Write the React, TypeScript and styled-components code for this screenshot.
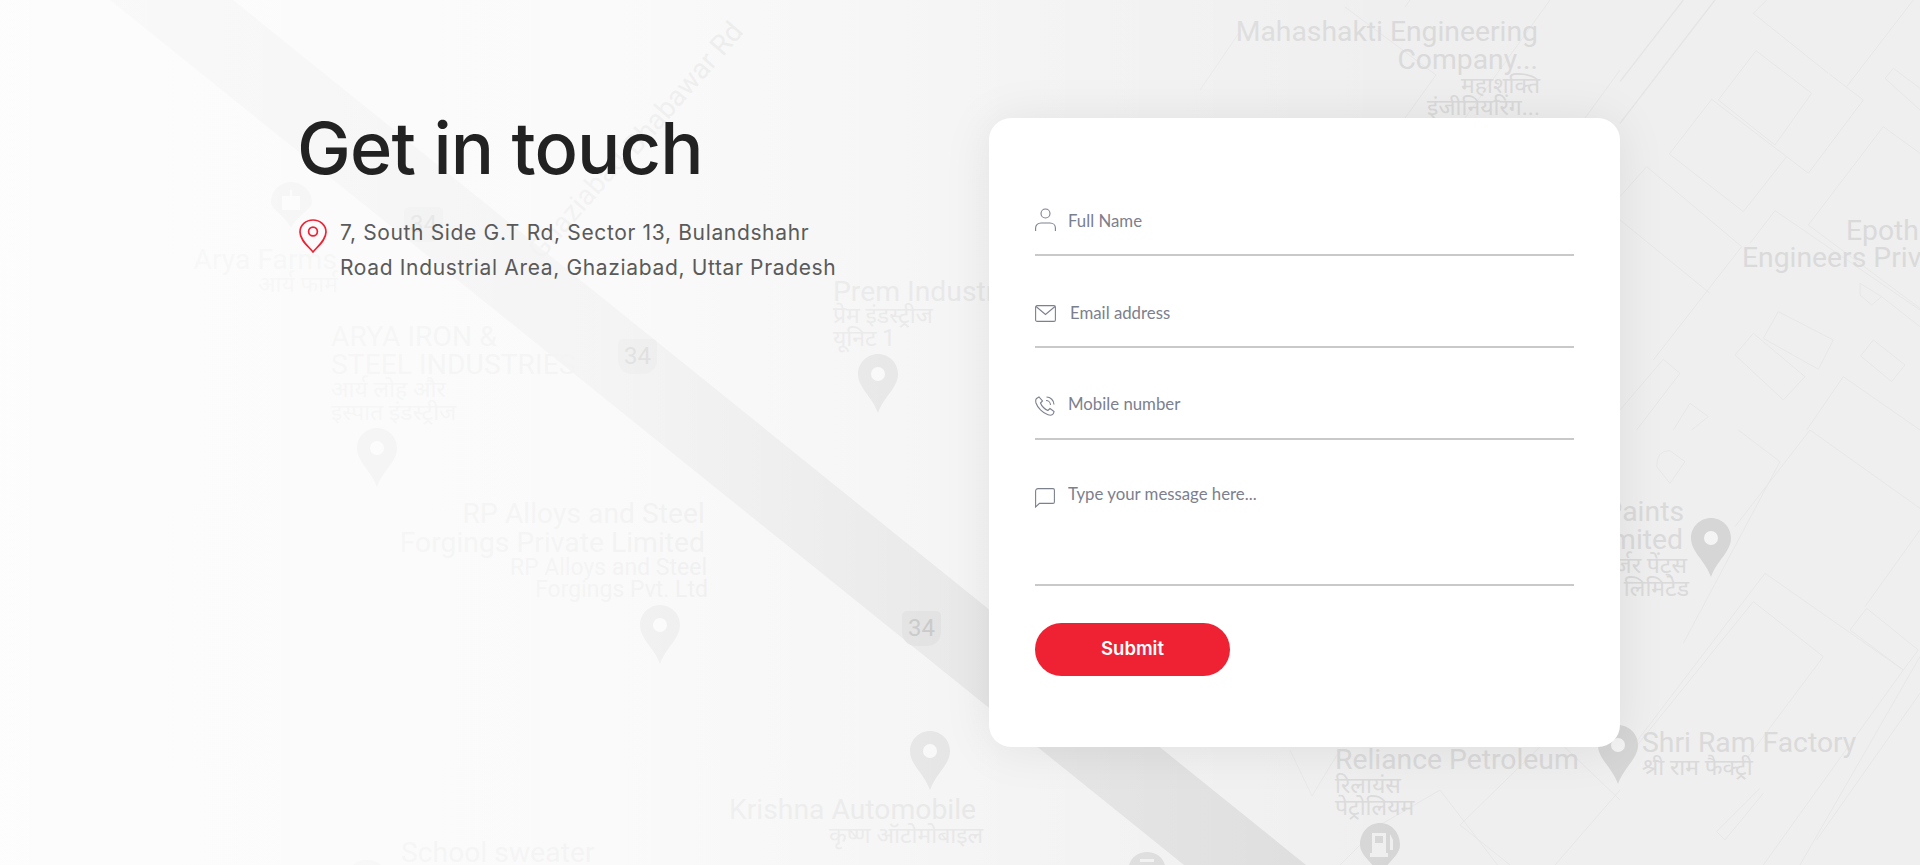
import React from 'react';
import styled, { createGlobalStyle } from 'styled-components';

const GlobalStyle = createGlobalStyle`
  html, body {
    margin: 0;
    padding: 0;
    background: #fff;
  }
  * {
    box-sizing: border-box;
  }
`;

const headingFont = `Inter, "Liberation Sans", sans-serif`;
const formFont = `Lato, "Open Sans", sans-serif`;
const mapFont = `Roboto, "Noto Sans", sans-serif`;

type Label = { text: string; x: number; y: number; end?: boolean; small?: boolean };

const labels: Label[] = [
  { text: 'Arya Farms', x: 337, y: 270, end: true },
  { text: 'आर्य फार्म', x: 338, y: 292, end: true, small: true },
  { text: 'ARYA IRON &', x: 331, y: 347 },
  { text: 'STEEL INDUSTRIES', x: 331, y: 375 },
  { text: 'आर्य लोह और', x: 331, y: 397, small: true },
  { text: 'इस्पात इंडस्ट्रीज', x: 331, y: 420, small: true },
  { text: 'Prem Industries', x: 833, y: 302 },
  { text: 'प्रेम इंडस्ट्रीज', x: 833, y: 323, small: true },
  { text: 'यूनिट 1', x: 833, y: 346, small: true },
  { text: 'RP Alloys and Steel', x: 705, y: 524, end: true },
  { text: 'Forgings Private Limited', x: 705, y: 553, end: true },
  { text: 'RP Alloys and Steel', x: 707, y: 575, end: true, small: true },
  { text: 'Forgings Pvt. Ltd', x: 708, y: 597, end: true, small: true },
  { text: 'Krishna Automobile', x: 729, y: 820 },
  { text: 'कृष्ण ऑटोमोबाइल', x: 829, y: 843, small: true },
  { text: 'School sweater', x: 401, y: 863 },
  { text: 'Mahashakti Engineering', x: 1538, y: 42, end: true },
  { text: 'Company...', x: 1538, y: 70, end: true },
  { text: 'महाशक्ति', x: 1540, y: 93, end: true, small: true },
  { text: 'इंजीनियरिंग...', x: 1540, y: 115, end: true, small: true },
  { text: 'Epothane', x: 1846, y: 241 },
  { text: 'Engineers Private', x: 1742, y: 268 },
  { text: 'Paints', x: 1684, y: 522, end: true },
  { text: 'Limited', x: 1683, y: 550, end: true },
  { text: 'गुर्जर पेंट्स', x: 1687, y: 573, end: true, small: true },
  { text: 'लिमिटेड', x: 1689, y: 596, end: true, small: true },
  { text: 'Reliance Petroleum', x: 1335, y: 770 },
  { text: 'रिलायंस', x: 1335, y: 793, small: true },
  { text: 'पेट्रोलियम', x: 1335, y: 815, small: true },
  { text: 'Shri Ram Factory', x: 1642, y: 753 },
  { text: 'श्री राम फैक्ट्री', x: 1642, y: 775, small: true },
];

const pins = [
  { x: 357, y: 428 },
  { x: 858, y: 354 },
  { x: 640, y: 605 },
  { x: 910, y: 731 },
  { x: 1691, y: 518 },
  { x: 1598, y: 725 },
];

const shields = [
  { x: 404, y: 207 },
  { x: 618, y: 339 },
  { x: 902, y: 611 },
];

// block outlines traced from the map, coordinates are 3x crop space
const blocksRight = [
  'M275 298L500 470L370 635L148 462Z',
  'M408 152L575 280L465 435L295 300Z',
  'M628 222L730 300L565 520L500 470',
  'M400 40L625 220M400 40L440 0M680 260L880 0',
  'M820 205L900 265M795 235L820 205M795 235L900 330',
  'M900 460L790 380L565 675L900 925',
  'M465 632L900 930M465 632L390 730',
  'M0 590L80 500L365 740L100 1080',
  'M0 660L270 880',
  'M400 1000L555 1130L490 1200L345 1065Z',
  'M475 935L640 1020L595 1108L430 1015Z',
  'M760 1020L855 1095L815 1145L722 1068Z',
  'M900 1290L670 1130L560 1290',
  'M0 1230L130 1078L180 1120L50 1290',
  'M160 1290L210 1210L265 1250L215 1290',
  'M720 850L785 890L755 915L720 885Z',
  'M785 890L900 980',
];

const blocksLowerRight = [
  'M345 290L570 0L900 235',
  'M355 0L480 95L190 640',
  'M435 430L850 720L430 1305',
  'M435 430L0 1000',
  'M400 515L610 680L370 1000',
  'M400 515L40 960',
  'M690 600L740 535L895 660L850 720Z',
  'M900 680L540 1305',
  'M900 790L590 1230',
  'M420 1075L290 1205L315 1230L430 1090',
  'M735 530L900 300',
  'M110 110Q110 60 150 62L195 95L150 160Z',
];

const blocksMiddle = [
  'M1241 30L1200 90',
  'M1345 7L1436 75L1400 125',
  'M1405 7L1410 0',
  'M1460 125L1550 0',
  'M1580 125L1620 70',
  'M1340 865L1380 825L1440 790L1506 876',
  'M1460 825L1552 735L1620 800',
  'M1460 825L1510 865',
  'M1290 750L1312 796L1340 750',
  'M1555 865L1620 790',
];

const Page = styled.div`
  position: relative;
  width: 100%;
  height: 865px;
  overflow: hidden;
  background: #efefef;
`;

const MapLayer = styled.div`
  position: absolute;
  inset: 0;
  overflow: hidden;
`;

const MapDrawing = styled.svg`
  position: absolute;
  inset: 0;
`;

const MapText = styled.span<{ $x: number; $y: number; $end?: boolean; $small?: boolean }>`
  position: absolute;
  top: calc(${(p) => p.$y}px - 0.76em);
  ${(p) => (p.$end ? `right: calc(100% - ${p.$x}px);` : `left: ${p.$x}px;`)}
  font-family: ${mapFont};
  font-size: ${(p) => (p.$small ? 23 : 28.3)}px;
  line-height: 0.84;
  color: #dadada;
  white-space: nowrap;
`;

const RoadName = styled.span<{ $x: number; $y: number }>`
  position: absolute;
  left: ${(p) => p.$x}px;
  top: ${(p) => p.$y}px;
  font-family: ${mapFont};
  font-size: 28px;
  line-height: 1;
  color: #d4d4d4;
  white-space: nowrap;
  transform: rotate(-49deg);
  transform-origin: 0 100%;
`;

const ShieldBox = styled.div<{ $x: number; $y: number }>`
  position: absolute;
  left: ${(p) => p.$x}px;
  top: ${(p) => p.$y}px;
  width: 39px;
  height: 35px;
  border-radius: 5px 5px 14px 14px;
  background: #d0d0d0;
  color: #a6a6a6;
  font-family: ${mapFont};
  font-size: 24px;
  line-height: 35px;
  text-align: center;
`;

const MapFade = styled.div`
  position: absolute;
  inset: 0;
  background: linear-gradient(
    to right,
    rgba(255, 255, 255, 0.85) 0,
    rgba(255, 255, 255, 0.7) 600px,
    rgba(255, 255, 255, 0.25) 1100px,
    rgba(255, 255, 255, 0) 1400px
  );
`;

const Section = styled.section`
  position: relative;
  display: flex;
  padding: 110px 0 110px 299px;
`;

const InfoColumn = styled.div`
  width: 690px;
  flex: none;
`;

const Heading = styled.h1`
  margin: -1px 0 28px -2px;
  font-family: ${headingFont};
  font-size: 72px;
  line-height: 78px;
  font-weight: 450;
  letter-spacing: -0.85px;
  color: #222;
`;

const Address = styled.div`
  display: flex;
  gap: 13px;
  align-items: flex-start;
`;

const AddressPin = styled.svg`
  flex: none;
  margin-top: 4px;
`;

const AddressText = styled.p`
  margin: 0;
  font-family: ${headingFont};
  font-size: 21px;
  line-height: 35px;
  letter-spacing: 0.65px;
  color: #5a5a5a;
`;

const Card = styled.form`
  width: 631px;
  height: 629px;
  margin-top: 8px;
  padding: 46px 46px 0;
  background: #fff;
  border-radius: 22px;
  box-shadow: 0 2px 50px rgba(0, 0, 0, 0.08);
`;

const Field = styled.label<{ $tall?: boolean }>`
  display: flex;
  align-items: flex-start;
  gap: 12px;
  height: ${(p) => (p.$tall ? 146 : 92)}px;
  padding-bottom: 10px;
  border-bottom: 2px solid #c9c9c9;
`;

const IconSlot = styled.span<{ $top: number }>`
  display: flex;
  flex: none;
  width: 21px;
  margin-top: ${(p) => p.$top}px;
`;

const fieldText = `
  flex: 1;
  border: 0;
  outline: 0;
  padding: 0;
  background: transparent;
  font-family: ${formFont};
  font-size: 16.8px;
  line-height: 24px;
  color: #7c808e;
  &::placeholder {
    color: #7c808e;
    opacity: 1;
  }
`;

const TextInput = styled.input<{ $top: number; $indent?: boolean }>`
  ${fieldText}
  height: 24px;
  margin-top: ${(p) => p.$top}px;
  margin-left: ${(p) => (p.$indent ? 2 : 0)}px;
`;

const TextArea = styled.textarea`
  ${fieldText}
  height: 60px;
  margin-top: 42px;
  resize: none;
`;

const SubmitButton = styled.button`
  display: block;
  width: 195px;
  height: 53px;
  margin-top: 37px;
  padding: 0 0 4px;
  border: 0;
  border-radius: 27px;
  background: #ee2233;
  color: #fff;
  font-family: ${headingFont};
  font-size: 18.5px;
  font-weight: 600;
`;

const Pin = ({ x, y }: { x: number; y: number }) => (
  <g transform={`translate(${x} ${y})`}>
    <path d="M20 0C9 0 0 9 0 20C0 34 14 42 20 59C26 42 40 34 40 20C40 9 31 0 20 0Z" fill="#d6d6d6" />
    <circle cx="20" cy="20" r="7" fill="#f4f4f4" />
  </g>
);

const MapBackground = () => (
  <MapLayer>
    <MapDrawing width="1920" height="865" viewBox="0 0 1920 865">
      <polygon points="110,0 233,0 1306,865 1184,865" fill="#dcdcdc" />
      <g fill="none" stroke="#e7e7e7" strokeWidth="3" transform="translate(1620 0) scale(0.3333)">
        {blocksRight.map((d) => (
          <path key={d} d={d} />
        ))}
        <path d="M190 0L0 245M285 0L0 370" stroke="#e5e5e5" strokeWidth="4" />
      </g>
      <g fill="none" stroke="#e7e7e7" strokeWidth="3" transform="translate(1620 430) scale(0.3333)">
        {blocksLowerRight.map((d) => (
          <path key={d} d={d} />
        ))}
      </g>
      <g fill="none" stroke="#e7e7e7" strokeWidth="1">
        {blocksMiddle.map((d) => (
          <path key={d} d={d} />
        ))}
      </g>
      <g>
        <path d="M291 182C280 182 271 191 271 202C271 210 284 214 291 228C298 214 312 210 312 202C312 191 302 182 291 182Z" fill="#d8d8d8" />
        <path d="M282 196H290V190H292V196H300V210H282Z" fill="#f2f2f2" />
        <path d="M1380 823C1369 823 1360 832 1360 845C1360 855 1372 862 1380 875C1388 862 1400 855 1400 845C1400 832 1391 823 1380 823Z" fill="#d6d6d6" />
        <path d="M1372 833H1386V853H1388V857H1370V853H1372ZM1375 836V843H1383V836ZM1390 834L1393 840V850H1390Z" fill="#efefef" />
        <path d="M1147 852C1136 852 1128 860 1128 872V880H1166V872C1166 860 1158 852 1147 852Z" fill="#d6d6d6" />
        <path d="M1140 859H1154V862H1140Z" fill="#efefef" />
        <path d="M367 860C358 860 352 864 350 870H384C382 864 376 860 367 860Z" fill="#e0e0e0" />
        {pins.map((p) => (
          <Pin key={p.x} x={p.x} y={p.y} />
        ))}
      </g>
    </MapDrawing>
    {shields.map((s) => (
      <ShieldBox key={s.x} $x={s.x} $y={s.y}>
        34
      </ShieldBox>
    ))}
    {labels.map((l) => (
      <MapText key={`${l.text}${l.y}`} $x={l.x} $y={l.y} $end={l.end} $small={l.small}>
        {l.text}
      </MapText>
    ))}
    <RoadName $x={545} $y={236}>
      Ghaziabad
    </RoadName>
    <RoadName $x={640} $y={132}>
      Bhabawar Rd
    </RoadName>
    <MapFade />
  </MapLayer>
);

const App = () => (
  <Page>
    <GlobalStyle />
    <MapBackground />
    <Section>
      <InfoColumn>
        <Heading>Get in touch</Heading>
        <Address>
          <AddressPin width="28" height="34" viewBox="0 0 28 34" fill="none" stroke="#ee2233" strokeWidth="1.7">
            <path d="M14 33C9 27 1 21 1 13C1 6 7 1 14 1C21 1 27 6 27 13C27 21 19 27 14 33Z" />
            <circle cx="14" cy="12.5" r="4.4" />
          </AddressPin>
          <AddressText>
            7, South Side G.T Rd, Sector 13, Bulandshahr
            <br />
            Road Industrial Area, Ghaziabad, Uttar Pradesh
          </AddressText>
        </Address>
      </InfoColumn>
      <Card>
        <div>
          <Field>
            <IconSlot $top={44}>
              <svg width="21" height="24" viewBox="0 0 21 24" fill="none" stroke="#7d818e" strokeWidth="1.1">
                <circle cx="10.5" cy="5.5" r="4.5" />
                <path d="M0.6 23V20C0.6 17 3 15 6 15H15C18 15 20.4 17 20.4 20V23" />
              </svg>
            </IconSlot>
            <TextInput $top={45} placeholder="Full Name" />
          </Field>
          <Field>
            <IconSlot $top={49}>
              <svg width="21" height="17" viewBox="0 0 21 17" fill="none" stroke="#7d818e" strokeWidth="1.1">
                <rect x="0.6" y="0.6" width="19.8" height="15.8" rx="1.5" />
                <path d="M1 1.5L10.5 9.5L20 1.5" />
              </svg>
            </IconSlot>
            <TextInput $top={45} $indent placeholder="Email address" />
          </Field>
          <Field>
            <IconSlot $top={48}>
              <svg width="20" height="20" viewBox="0 0 20 20" fill="none" stroke="#7d818e" strokeWidth="1.1">
                <path d="M4 1L1.5 2.5C0.5 3.5 0.5 5 1 7C2.5 11.5 7.5 17 13 18.8C15 19.5 17.5 19 18.5 17.5L19 15.5L15 12.5L12.8 14.5C10 13.5 6.5 10 5.5 7L7.5 5Z" />
                <path d="M11 4.5C13.5 4.5 15.5 6.5 15.5 9M11.5 1C15.5 1 19 4.5 19 8.5" />
              </svg>
            </IconSlot>
            <TextInput $top={44} placeholder="Mobile number" />
          </Field>
          <Field $tall>
            <IconSlot $top={48}>
              <svg width="20" height="20" viewBox="0 0 20 20" fill="none" stroke="#7d818e" strokeWidth="1.1">
                <path d="M0.6 19V3C0.6 1.6 1.6 0.6 3 0.6H18C18.8 0.6 19.4 1.2 19.4 2V14C19.4 15 18.8 15.4 18 15.4H4.5Z" />
              </svg>
            </IconSlot>
            <TextArea placeholder="Type your message here..." />
          </Field>
        </div>
        <SubmitButton type="button">Submit</SubmitButton>
      </Card>
    </Section>
  </Page>
);

export default App;
